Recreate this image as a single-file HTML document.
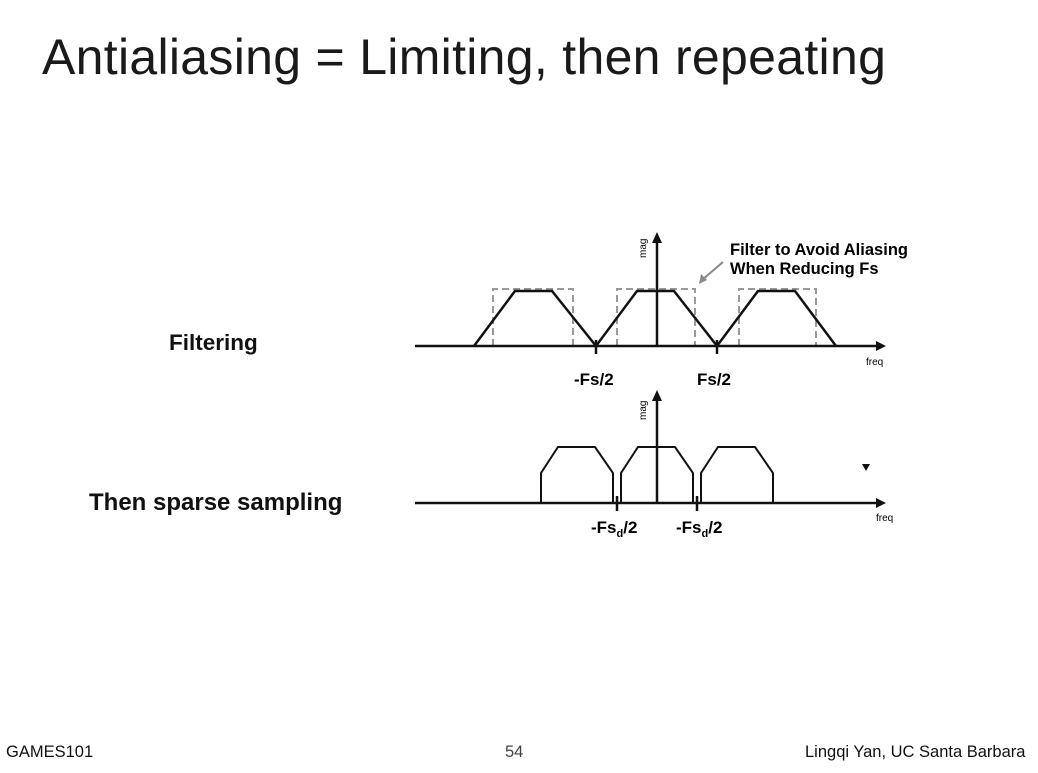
<!DOCTYPE html>
<html><head><meta charset="utf-8"><style>
body{margin:0;width:1038px;height:773px;background:#fff;position:relative;overflow:hidden;font-family:"Liberation Sans",Arial,sans-serif;color:#111}
.t{position:absolute;white-space:nowrap}
</style></head><body>
<div class="t" style="left:42px;top:28px;font-size:50px;color:#1a1a1a;letter-spacing:0.3px">Antialiasing = Limiting, then repeating</div>
<div class="t" style="left:169px;top:330px;font-size:22.5px;font-weight:bold">Filtering</div>
<div class="t" style="left:89px;top:489px;font-size:24px;font-weight:bold">Then sparse sampling</div>
<div class="t" style="left:6px;top:743px;font-size:16.5px">GAMES101</div>
<div class="t" style="left:505px;top:743px;font-size:16.5px;color:#444">54</div>
<div class="t" style="left:805px;top:743px;font-size:16.5px">Lingqi Yan, UC Santa Barbara</div>
<svg width="1038" height="773" style="position:absolute;left:0;top:0" font-family="Liberation Sans, Arial, sans-serif">
<g fill="none" stroke="#999" stroke-width="2" stroke-dasharray="7,4">
<path d="M493 346V289H573V346M617 346V289H695V346M739 346V289H816V346"/>
</g>
<g fill="none" stroke="#111" stroke-width="2.5">
<path d="M415 346H878M657 346V238"/>
<path d="M474 346L515 291H552L596 346L637 291H674L717 346L758 291H795L836 346"/>
<path d="M596 340V354M717 340V354"/>
<path d="M415 503H878M657 503V400"/>
<path d="M541 503V473L558 447H595L613 473V503M621 503V473L638 447H675L693 473V503M701 503V473L718 447H755L773 473V503" stroke-width="2"/>
<path d="M617 496V511M697 496V511"/>
</g>
<polygon points="886,346 876,341 876,351" fill="#111"/>
<polygon points="657,232 652,243 662,243" fill="#111"/>
<polygon points="886,503 876,498 876,508" fill="#111"/>
<polygon points="657,390 652,401 662,401" fill="#111"/>
<polygon points="862,464 870,464 866,471" fill="#111"/>
<path d="M723 262L702 280" stroke="#888" stroke-width="2"/>
<polygon points="699,284 701,274 707,280" fill="#888"/>
<text x="730" y="255" font-size="16.5" font-weight="bold" textLength="178">Filter to Avoid Aliasing</text>
<text x="730" y="274" font-size="16.5" font-weight="bold">When Reducing Fs</text>
<text x="646" y="258" font-size="10" transform="rotate(-90 646 258)">mag</text>
<text x="646" y="420" font-size="10" transform="rotate(-90 646 420)">mag</text>
<text x="866" y="365" font-size="10">freq</text>
<text x="876" y="521" font-size="10">freq</text>
<text x="574" y="385" font-size="17" font-weight="bold">-Fs/2</text>
<text x="697" y="385" font-size="17" font-weight="bold">Fs/2</text>
<text x="591" y="533" font-size="17" font-weight="bold">-Fs<tspan font-size="11" dy="4">d</tspan><tspan dy="-4">/2</tspan></text>
<text x="676" y="533" font-size="17" font-weight="bold">-Fs<tspan font-size="11" dy="4">d</tspan><tspan dy="-4">/2</tspan></text>
</svg>
</body></html>
